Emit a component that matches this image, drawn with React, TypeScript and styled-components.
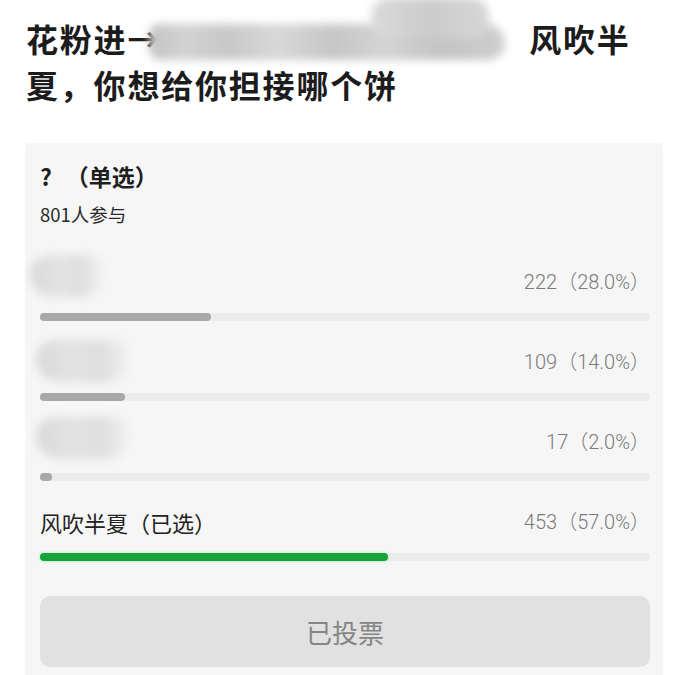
import React from "react";
import styled, { createGlobalStyle } from "styled-components";

const Global = createGlobalStyle`
  html, body { margin: 0; padding: 0; background: #ffffff; }
  body { font-family: "Noto Sans CJK SC", "Noto Sans", sans-serif; }
  * { box-sizing: border-box; }
`;

const Page = styled.div`
  width: 690px;
  height: 675px;
  overflow: hidden;
  background: #ffffff;
`;

const Title = styled.h1`
  margin: 0;
  padding: 15px 20px 0 26px;
  font-family: "Noto Sans CJK SC", sans-serif;
  font-size: 32px;
  font-weight: 700;
  line-height: 46px;
  color: #1c1c1c;
  letter-spacing: 1.8px;
`;

const TitleLine = styled.div`
  display: flex;
  align-items: center;
  white-space: nowrap;
`;

const TitleSmudge = styled.span`
  position: relative;
  display: block;
  flex: none;
  width: 356px;
  height: 36px;
  margin-left: -12px;
  margin-right: 24px;
  margin-top: 8px;
  &::before {
    content: "";
    position: absolute;
    left: 0;
    top: 0;
    width: 100%;
    height: 100%;
    border-radius: 14px 30px 26px 18px;
    background: linear-gradient(
      90deg,
      #c4c4c4 0%,
      #d2d2d2 10%,
      #c8c8c8 22%,
      #d8d8d8 36%,
      #c6c6c6 52%,
      #d4d4d4 66%,
      #c4c4c4 82%,
      #cfcfcf 100%
    );
    filter: blur(4px);
  }
  &::after {
    content: "";
    position: absolute;
    left: 222px;
    top: -26px;
    width: 118px;
    height: 40px;
    border-radius: 18px;
    background: linear-gradient(90deg, #dadada, #cbcbcb 50%, #d6d6d6);
    filter: blur(4px);
  }
`;

const Card = styled.section`
  margin: 36px 27px 0 25px;
  padding: 18px 13px 30px 15px;
  background: #f6f6f6;
  border-radius: 4px;
`;

const Question = styled.div`
  display: flex;
  align-items: center;
  gap: 14px;
  font-size: 23px;
  font-weight: 700;
  line-height: 30px;
  color: #1e1e1e;
`;

const Participants = styled.div`
  margin-top: 11px;
  font-size: 18.5px;
  line-height: 24px;
  color: #2a2a2a;
`;

const Options = styled.div`
  margin-top: 40px;
  display: flex;
  flex-direction: column;
  gap: 25px;
`;

const Option = styled.div`
  display: flex;
  flex-direction: column;
  gap: 15px;
`;

const OptionHead = styled.div`
  display: flex;
  align-items: center;
  justify-content: space-between;
  height: 32px;
`;

const Label = styled.span`
  font-size: 22px;
  line-height: 32px;
  color: #222222;
`;

const LabelSmudge = styled.span<{ $w: number; $dx: number; $dy: number }>`
  display: block;
  width: ${(p) => p.$w}px;
  height: 42px;
  margin-left: ${(p) => p.$dx}px;
  margin-top: ${(p) => p.$dy}px;
  border-radius: 22px 16px 22px 26px;
  background: linear-gradient(90deg, #d9d9d9 0%, #e3e3e3 40%, #dedede 70%, #f0f0f0 100%);
  filter: blur(4px);
`;

const Count = styled.span`
  padding-right: 0;
  font-family: "Roboto", "Noto Sans CJK SC", sans-serif;
  font-size: 20px;
  font-weight: 300;
  line-height: 32px;
  color: #7a7a7a;
`;

const Track = styled.div`
  height: 8px;
  background: #ececec;
  border-radius: 4px;
`;

const Fill = styled.div<{ $chosen?: boolean }>`
  height: 100%;
  border-radius: 4px;
  background: ${(p) => (p.$chosen ? "#18a33a" : "#a8a8a8")};
  box-shadow: ${(p) => (p.$chosen ? "0 0 3px rgba(60, 220, 90, 0.5)" : "none")};
`;

const VoteButton = styled.button`
  display: flex;
  align-items: center;
  justify-content: center;
  width: 100%;
  height: 71px;
  margin-top: 35px;
  border: none;
  border-radius: 10px;
  background: #e1e1e1;
  font-family: "Noto Sans CJK SC", sans-serif;
  font-size: 26px;
  color: #858585;
  cursor: default;
`;

type Opt = {
  label?: string;
  smudge?: { w: number; dx: number; dy: number };
  votes: number;
  pct: number;
  chosen?: boolean;
};

const options: Opt[] = [
  { smudge: { w: 72, dx: -10, dy: -12 }, votes: 222, pct: 28.0 },
  { smudge: { w: 92, dx: -4, dy: -2 }, votes: 109, pct: 14.0 },
  { smudge: { w: 92, dx: -4, dy: -8 }, votes: 17, pct: 2.0 },
  { label: "风吹半夏（已选）", votes: 453, pct: 57.0, chosen: true },
];

export default function App() {
  return (
    <Page>
      <Global />
      <Title>
        <TitleLine>
          <span>花粉进→</span>
          <TitleSmudge aria-hidden="true" />
          <span>风吹半</span>
        </TitleLine>
        <TitleLine>夏，你想给你担接哪个饼</TitleLine>
      </Title>
      <Card>
        <Question>
          <span>?</span>
          <span>（单选）</span>
        </Question>
        <Participants>801人参与</Participants>
        <Options>
          {options.map((o, i) => (
            <Option key={i}>
              <OptionHead>
                {o.label ? (
                  <Label>{o.label}</Label>
                ) : (
                  <LabelSmudge $w={o.smudge!.w} $dx={o.smudge!.dx} $dy={o.smudge!.dy} />
                )}
                <Count>
                  {o.votes}（{o.pct.toFixed(1)}%）
                </Count>
              </OptionHead>
              <Track>
                <Fill $chosen={o.chosen} style={{ width: `${o.pct}%` }} />
              </Track>
            </Option>
          ))}
        </Options>
        <VoteButton>已投票</VoteButton>
      </Card>
    </Page>
  );
}
